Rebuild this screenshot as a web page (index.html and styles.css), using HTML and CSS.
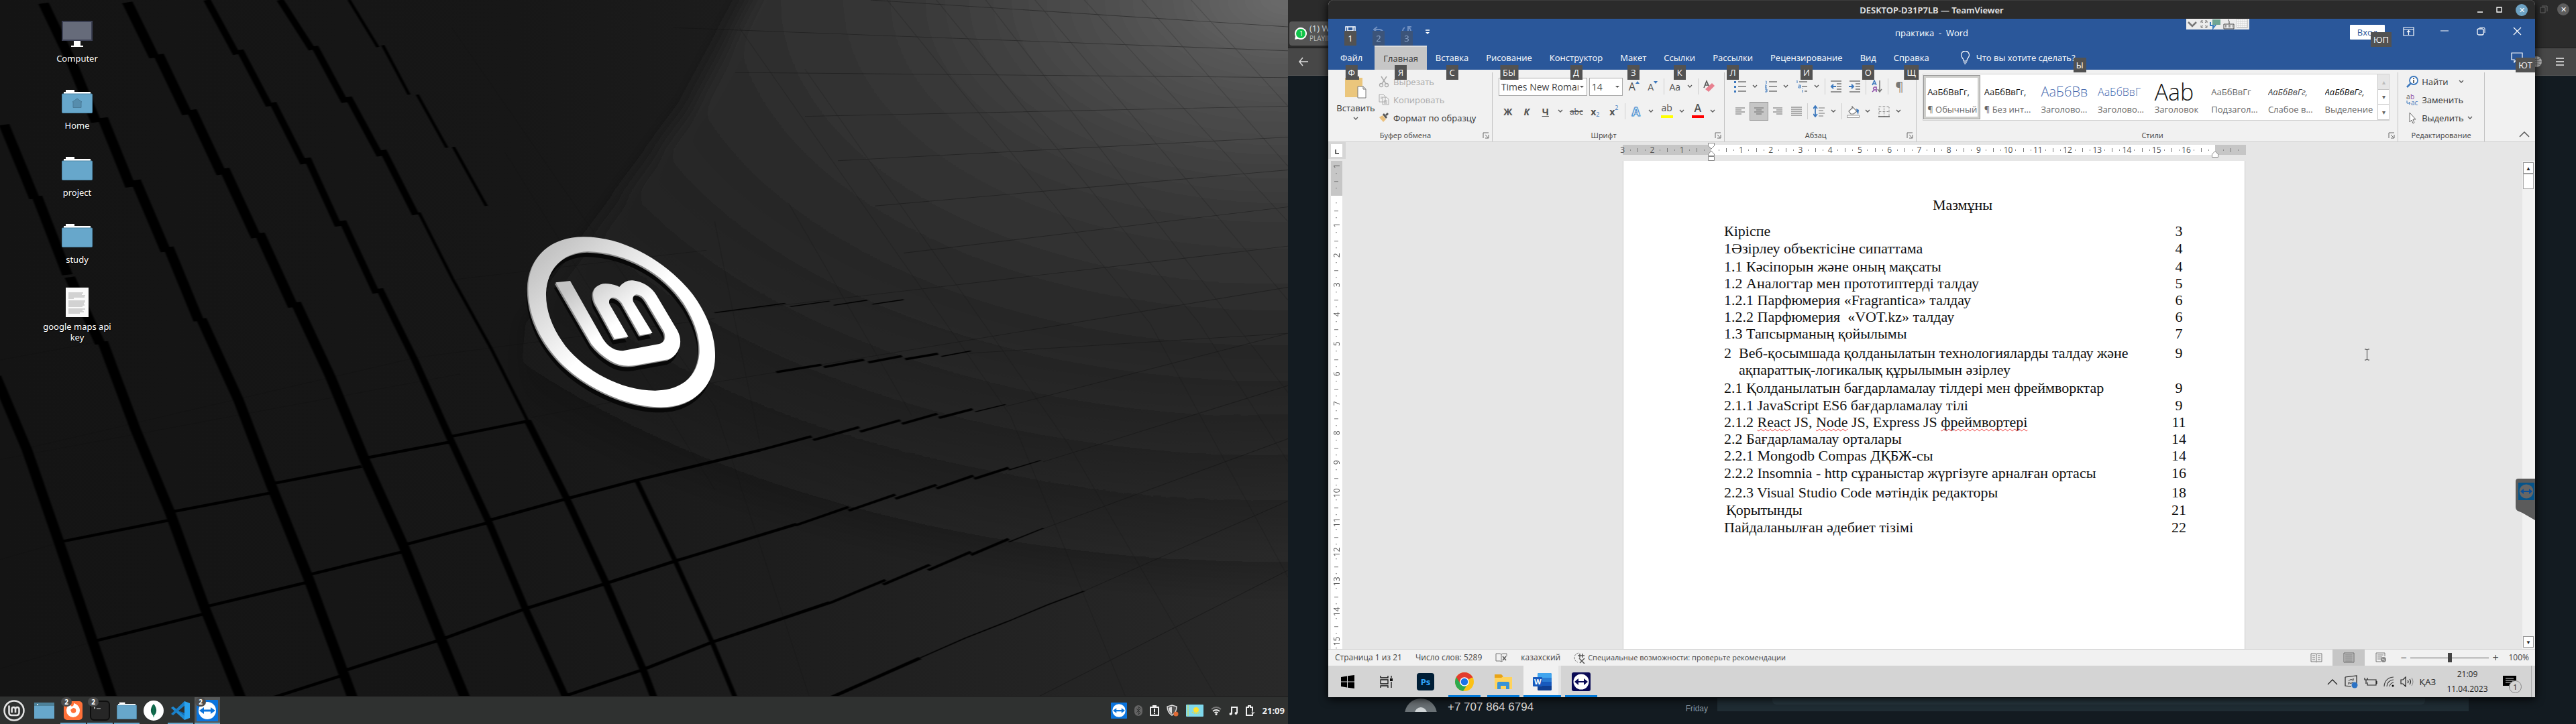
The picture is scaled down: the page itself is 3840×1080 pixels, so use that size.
FILE: index.html
```html
<!DOCTYPE html>
<html lang="ru">
<head>
<meta charset="utf-8">
<title>практика - Word</title>
<link rel="stylesheet" href="styles.css">
</head>
<body>
<svg class="defs" aria-hidden="true">
  <symbol id="chev" viewBox="0 0 8 6"><path d="M1 1l3 3 3-3" fill="none" stroke="#555" stroke-width="1.3"/></symbol>
  <symbol id="launch" viewBox="0 0 10 10"><path d="M1 9V1h8M4 4l4 4M9 4v5H4" fill="none" stroke="#666"/></symbol>
  <symbol id="folder" viewBox="0 0 46 36"><path d="M3 10V4h3V1h13v3h24v6z" fill="#fff"/><rect x=".5" y="7" width="45" height="28.500" rx="1" fill="#67a7cb" stroke="#4c87a8"/></symbol>
  <symbol id="tv" viewBox="0 0 32 32"><rect width="32" height="32" rx="1" fill="#0b74dc"/><circle cx="16" cy="16" r="13" fill="#fff"/><path d="M4 16l7-5v3.500h10V11l7 5-7 5v-3.500H11V21z" fill="#0b74dc"/></symbol>
  <symbol id="mint" viewBox="0 0 32 32"><circle cx="16" cy="16" r="14.500" fill="none" stroke="#e4e4e4" stroke-width="2.500"/><path d="M8.500 8.500V19q0 4 4 4h7q4 0 4-4v-5q0-3-2.700-3T18 14v5m0-5q0-3-2.700-3T12.600 14v5" fill="none" stroke="#e4e4e4" stroke-width="2.600"/></symbol>
</svg>
<div class="screens">
<section class="monitor linux">
  <svg class="wallpaper" viewBox="0 0 1920 1080" preserveAspectRatio="none" aria-hidden="true">
    <defs>
      <radialGradient id="glow" gradientUnits="userSpaceOnUse" cx="1568" cy="0" r="1300"><stop offset="0" stop-color="#6c6c6c"/><stop offset=".12" stop-color="#555"/><stop offset=".35" stop-color="#383838"/><stop offset=".6" stop-color="#272727"/><stop offset="1" stop-color="#1b1b1b" stop-opacity="0"/></radialGradient>
      <linearGradient id="base" x2="1"><stop offset="0" stop-color="#141414"/><stop offset=".4" stop-color="#171717"/><stop offset="1" stop-color="#292929"/></linearGradient>
      <linearGradient id="metal" x2="1" y2="1"><stop offset=".1" stop-color="#c4c4c4"/><stop offset=".5" stop-color="#fff"/></linearGradient>
      <filter id="soft" x="-20%" y="-20%" width="140%" height="140%"><feGaussianBlur stdDeviation="14"/></filter>
      <filter id="edge"><feGaussianBlur stdDeviation="1"/></filter>
    </defs>
    <rect width="1920" height="1080" fill="url(#base)"/>
    <g transform="scale(1.2245 .6888)">
      <path d="M930-60L845 220 730 490 640 700 620 1000 700 1600H1700V-60z" fill="url(#glow)" filter="url(#soft)"/>
      <g stroke="#111" stroke-width="1.300" fill="none" opacity=".45">
        <path d="M1060 0L1568 58M820 60L1568 110M895 157L1568 168M980 252L1568 230M1020 348L1568 297M1065 446L1568 368M1100 548L1568 448M870 678L1568 533M870 828L1568 622M1180 765L1568 722M1225 880L1568 722M1270 1000L1568 835M1270 1145L1568 950M1320 1280L1568 1085M1265 1508L1568 1235M555 605L860 542M505 775L870 690M30 972L505 775M0 995L560 810M0 1212L72 1175M0 1448L113 1390M120 740L0 780M645 905L870 828"/>
        <path d="M550 60L870 880 985 1508M615 330L870 1060M870 480L925 960M960 440L1110 900M1080 0L1400 700 1568 1250M1140 0L1460 700 1568 1000M1200 0L1568 850M1260 0L1568 650M1320 0L1568 480M1390 0L1568 360M1450 0L1568 230M980 150L1300 960 1480 1508M900 60L1230 900 1370 1508" opacity=".4"/>
      </g>
      <g stroke="#060606" stroke-width="13" fill="none" filter="url(#edge)">
        <path d="M-5 815L33 975 72 1175 113 1390 137 1515M5 270L42 430M45 425L82 595M85 600L122 745M125 740L165 930 207 1110 250 1320 294 1515M53 7L88 138 117 265M125 255L159 405M165 390L202 545M205 535L242 695M245 690L290 865 330 1050 375 1250 430 1515M155 5L188 125M193 118L228 248M233 238L270 378M273 365L312 515M316 505L357 665M360 655L402 815 445 1000 492 1185 537 1385 567 1515"/>
        <path d="M252 0L288 118M292 108L328 230M332 222L370 355M374 342L412 490M417 478L458 635M462 625L505 780 548 950 595 1130 640 1320 690 1515M341 0L380 108M383 100L420 222M424 210L463 338M466 325L506 465" stroke-width="9"/>
        <path d="M510 460L551 604 598 755 642 910M425 0L460 102M466 98L498 205M508 205L544 320M552 318L592 446" stroke-width="4"/>
        <path d="M642 910L690 1080 737 1260 783 1450 797 1515" stroke-width="9"/><path d="M775 1040L822 1215 868 1395 896 1515" stroke-width="6"/>
        <path d="M72 1174L205 1127M205 1110L328 1068M330 1048L440 1010M445 992L548 957M550 945L642 912M112 1390L247 1330M250 1314L372 1262M375 1245L490 1195M492 1180L592 1133M595 1127L690 1080 775 1040 925 975M330 1512L418 1462M420 1452L537 1385 640 1318 735 1265 822 1215 970 1135M680 1512L783 1450 868 1390 1010 1305M1010 1512L1120 1425" stroke-width="6"/>
        <path d="M945 806L1000 790M1003 795L1052 779M1057 785L1098 771M1102 778L1142 766M925 975L988 945M990 953L1046 925M1047 935L1096 910M1098 918L1141 896M1143 905L1184 886M968 1138L1033 1098M1033 1106L1090 1071M1090 1080L1140 1050M1140 1058L1185 1030M1186 1037L1228 1013M1010 1306L1078 1256M1075 1266L1132 1223M1130 1235L1182 1195M1182 1202L1228 1167" stroke-width="5"/>
        <path d="M1146 772L1182 760M1187 892L1224 876M1228 1018L1267 997M1228 1174L1270 1144M1120 1425L1175 1382 1228 1345 1275 1310 1320 1280M870 677L956 657M962 664L1010 652M1015 661L1056 650M1062 659L1100 649" stroke-width="2"/>
      </g>
    </g>
    <g transform="translate(760 330) scale(.3333)" fill-rule="evenodd">
      <g fill="#080808" transform="translate(-8 24)"><use href="#ring"/><use href="#lm"/></g>
      <g fill="#8c8c8c" transform="translate(-5 5)"><use href="#ring"/><use href="#lm"/></g>
      <g fill="url(#metal)">
        <path id="ring" d="M330 70C530 70 720 200 820 330 900 440 920 540 918 610 915 740 820 832 680 832 500 832 290 720 190 590 110 490 82 390 82 300 85 150 190 70 330 70zM350 135C240 138 168 210 162 320 160 400 190 480 250 560 340 670 490 755 650 758 760 758 840 700 848 590 850 540 840 470 785 380 700 240 530 140 350 135z"/>
        <path id="lm" d="M205 274L270 267 410 515Q445 580 505 580L665 550Q705 540 690 495L610 360Q590 327 565 328 545 335 552 360L638 500 582 511 500 365Q480 340 460 341 440 345 445 370L530 517 468 527 380 365Q362 320 385 295 410 275 440 280 470 283 490 294 515 262 550 265 620 275 655 330L750 490Q768 525 760 560 745 605 710 618L560 645Q500 655 450 625 400 595 365 550z"/>
      </g>
    </g>
  </svg>
  <nav class="shortcuts">
    <a href="#"><svg width="46" height="40" viewBox="0 0 46 40"><rect x="1" y="1" width="44" height="28" fill="#666b7a" stroke="#3b3f52" stroke-width="2"/><path d="M18 30h10v7h4v2H14v-2h4z" fill="#fff"/></svg><span>Computer</span></a>
    <a href="#"><svg width="46" height="36" viewBox="0 0 46 36"><use href="#folder"/><path d="M16 19l7-5 7 5h-1v8.500H17V19z" fill="#568dad" stroke="#4a7b98"/></svg><span>Home</span></a>
    <a href="#"><svg width="46" height="36"><use href="#folder"/></svg><span>project</span></a>
    <a href="#"><svg width="46" height="36"><use href="#folder"/></svg><span>study</span></a>
    <a href="#"><svg width="34" height="44" viewBox="0 0 34 44"><path d="M0 0h34v44H0z" fill="#fafafa"/><path d="M4 8h22M4 10h20M4 12h25M4 14h24M4 16h8M4 20h25M4 22h24M4 24h23M4 26h24M4 28h21M4 32h25M4 34h21M4 36h23M4 38h17" stroke="#aaa"/></svg><span>google maps api key</span></a>
  </nav>
  <footer class="panel">
    <button class="menu" aria-label="Menu"><svg width="32" height="32"><use href="#mint"/></svg></button>
    <button class="show" aria-label="Show desktop"><svg width="30" height="24" viewBox="0 0 30 24"><path d="M0 0h30v24H0z" fill="#67a7cb"/><path d="M0 0h30v5H0z" fill="#4d8199"/><circle cx="5" cy="3" r="1" fill="#fff"/></svg></button>
    <button class="app run" aria-label="Firefox"><svg width="30" height="30" viewBox="0 0 30 30"><rect x="1" y="1" width="28" height="28" rx="5" fill="#ff7139"/><path d="M10 6l3 3c3-1 3-3 3-5 6 2 9 6 9 11a10 10 0 0 1-20 0c0-4 2-5 2-8z" fill="#fff"/><path d="M11 14l4-3c4 0 5 3 4 6-2 3-7 2-7-1z" fill="#ff7139"/></svg><b class="count">2</b></button>
    <button class="app run" aria-label="Terminal"><svg width="30" height="30" viewBox="0 0 30 30"><rect x="1" y="1" width="28" height="28" rx="5" fill="#262626" stroke="#0f0f0f" stroke-width="2"/><path d="M6 10l2 1-2 1M10 12h6" stroke="#ddd" fill="none"/></svg><b class="count">2</b></button>
    <button class="app run" aria-label="Files"><svg width="30" height="26" viewBox="0 0 46 36" preserveAspectRatio="none"><use href="#folder"/></svg></button>
    <button class="app" aria-label="MongoDB"><svg width="30" height="30" viewBox="0 0 30 30"><circle cx="15" cy="15" r="15" fill="#fff"/><path d="M15 5c6 7 5 14 0 18-5-4-6-11 0-18z" fill="#116149"/><path d="M15 6v19" stroke="#0a8a55"/></svg></button>
    <button class="app run" aria-label="VS Code"><svg width="30" height="30" viewBox="0 0 30 30"><path d="M1 11l3-2 18 14v-4z" fill="#0a6fc2"/><path d="M1 11l3-2 19 15-2 5L1 11z" fill="#1f8ad2"/><path d="M1 20L21 1l2 5L4 22z" fill="#1a7fc8"/><path d="M21 1l8 3v22l-8 3z" fill="#2aa2ee"/></svg></button>
    <button class="app run active" aria-label="TeamViewer"><svg width="32" height="32"><use href="#tv"/></svg><b class="count">2</b></button>
    <div class="tray">
      <svg width="24" height="24"><use href="#tv"/></svg>
      <svg width="12" height="16" viewBox="0 0 12 16"><rect width="12" height="16" rx="6" fill="#646464"/><path d="M3 5l6 6-3 3V2l3 3-6 6" fill="none" stroke="#2f3130"/></svg>
      <svg width="14" height="16" viewBox="0 0 14 16"><path d="M1 3h12v12H1zM5 3V1h4v2M7 5v5M7 11v2" fill="none" stroke="#eee" stroke-width="2"/></svg>
      <svg width="18" height="18" viewBox="0 0 18 18"><path d="M8 1l7 2c0 6-2 10-7 13C3 13 1 9 1 3z" fill="#555" stroke="#ddd" stroke-width="1.500"/><path d="M8 3v11c-3-2-5-5-5-9z" fill="#ddd"/><circle cx="14" cy="14" r="3.500" fill="#e06a35"/></svg>
      <svg width="26" height="18" viewBox="0 0 26 18"><rect width="26" height="18" rx="1" fill="#7fd8ec"/><circle cx="15" cy="8" r="4" fill="#ffe02e"/><path d="M9 11q6 5 12 0M3 1v16" stroke="#d9d84d" stroke-width="1.500" fill="none" stroke-dasharray="2 1"/></svg>
      <svg width="16" height="14" viewBox="0 0 16 14"><path d="M1 5q7-6 14 0" stroke="#777" stroke-width="2" fill="none"/><path d="M3 8q5-4 10 0M5.500 10.500q2.500-2 5 0" stroke="#eee" stroke-width="2" fill="none"/><circle cx="8" cy="12.500" r="1.500" fill="#eee"/></svg>
      <svg width="14" height="14" viewBox="0 0 14 14"><path d="M4 12V2h8v9" fill="none" stroke="#eee" stroke-width="2"/><circle cx="2.500" cy="12" r="2" fill="#eee"/><circle cx="10.500" cy="11" r="2" fill="#eee"/></svg>
      <svg width="14" height="16" viewBox="0 0 14 16"><path d="M1 3h3V1h3v2h3v12H1z" fill="none" stroke="#eee" stroke-width="2"/><path d="M11 7l-3 4h3l-1 4 4-5h-3z" fill="#999"/></svg>
      <time>21:09</time>
    </div>
  </footer>
</section>

<section class="monitor remote">
  <div class="browser">
    <div class="browser-tabs">
      <div class="browser-tab"><svg width="18" height="18" viewBox="0 0 18 18"><path d="M0 18l1-5A9 9 0 1 1 5 17z" fill="#fff"/><circle cx="9" cy="9" r="7" fill="#10c34a"/><text x="7" y="13" font-size="10" fill="#fff">1</text></svg><div><span>(1) WhatsApp</span><small>PLAYING</small></div></div>
      <div class="browser-ctl"><svg width="12" height="12" viewBox="0 0 12 12"><path d="M1 3h7v8H1zM3 1h8v8" fill="none" stroke="#666"/></svg><button class="round grey" aria-label="Close">✕</button></div>
    </div>
    <div class="browser-bar"><svg width="14" height="14" viewBox="0 0 14 14"><path d="M14 7H1M6 1L1 7l5 6" fill="none" stroke="#ddd" stroke-width="1.500"/></svg><span class="fill"></span><svg width="18" height="18" viewBox="0 0 18 18"><circle cx="9" cy="9" r="8" fill="#bbb"/><path d="M9 1v16M1 9h16M3 4q6 4 12 0M3 14q6-4 12 0" stroke="#666" fill="none"/></svg><svg width="12" height="12" viewBox="0 0 12 12"><path d="M0 1h12M0 6h12M0 11h12" stroke="#eee" stroke-width="1.500"/></svg></div>
    <div class="chat">
      <svg width="48" height="20" viewBox="0 0 48 20"><circle cx="24" cy="24" r="24" fill="#6a7175"/><circle cx="24" cy="22" r="9" fill="#cfd4d6"/></svg>
      <span class="phone">+7 707 864 6794</span><span class="day">Friday</span><span class="compose"><i></i></span>
    </div>
  </div>

  <div class="window">
    <header class="frame"><h1>DESKTOP-D31P7LB — TeamViewer</h1>
      <div class="frame-ctl"><svg width="8" height="8" viewBox="0 0 8 8"><path d="M0 7h8" stroke="#fff" stroke-width="1.500"/></svg><svg width="9" height="9" viewBox="0 0 9 9"><path d="M1 1h7v7H1z" fill="none" stroke="#fff" stroke-width="1.300"/></svg><button class="round" aria-label="Закрыть сеанс">✕</button></div>
    </header>
    <div class="word-title">
      <div class="quick">
        <button aria-label="Сохранить"><svg width="16" height="16" viewBox="0 0 16 16"><path d="M1 1h14v14H1zM4 1v6h8V1" fill="none" stroke="#fff" stroke-width="1.500"/></svg><kbd>1</kbd></button>
        <button class="dim" aria-label="Отменить"><svg width="16" height="14" viewBox="0 0 16 14"><path d="M6 1L1 5l5 4M1 5h9q5 1 5 7" fill="none" stroke="#c6d4ee" stroke-width="2"/></svg><kbd>2</kbd></button>
        <button class="dim" aria-label="Повторить"><svg width="16" height="16" viewBox="0 0 16 16"><path d="M5 2a6 6 0 1 0 6 0M10 7V1h5" fill="none" stroke="#c6d4ee" stroke-width="2"/></svg><kbd>3</kbd></button>
        <button class="more" aria-label="Настройка панели"><svg width="8" height="8" viewBox="0 0 8 8"><path d="M1 1h6" stroke="#fff" stroke-width="1.500"/><path d="M1 4h6L4 7z" fill="#fff"/></svg></button>
      </div>
      <p class="doc-name">практика&nbsp; -&nbsp; Word</p>
      <div class="tv-bar"><svg width="92" height="16" viewBox="0 0 92 16"><path d="M3 5l6 6 6-6" stroke="#777" stroke-width="2.500" fill="none"/><path d="M22 6V3h3M28 3h3v3M31 10v3h-3M25 13h-3v-3M22 3l3 3M31 3l-3 3M22 13l3-3M31 13l-3-3" stroke="#777" fill="none"/><path d="M39 1h12v8h-6l-3 3V9h-3z" fill="#6fa593"/><path d="M36 5v5h4v4l4-5" fill="none" stroke="#3c7ebd" stroke-width="2"/><path d="M56 8h15v7H56zM64 8V4l-1-3" fill="none" stroke="#444"/><path d="M58 10h11M58 12h11" stroke="#444" stroke-dasharray="1 1"/><path d="M75 0h17v14H75z" fill="#ccc"/><path d="M76 2h15M76 5h15M76 8h15M76 11h15" stroke="#fff" stroke-width="2" stroke-dasharray="2 1"/></svg></div>
      <div class="word-ctl">
        <button class="login">Вход<kbd>ЮП</kbd></button>
        <button aria-label="Параметры ленты"><svg width="17" height="14" viewBox="0 0 17 14"><path d="M1 1h15v12H1zM1 4h15M8.500 12V6M6 8l2.500-2.500L11 8" fill="none" stroke="#fff" stroke-width="1.200"/></svg></button>
        <button aria-label="Свернуть"><svg width="12" height="12" viewBox="0 0 12 12"><path d="M0 6h12" stroke="#fff"/></svg></button>
        <button aria-label="Развернуть"><svg width="13" height="13" viewBox="0 0 13 13"><rect x="1" y="3" width="9" height="9" rx="2" fill="none" stroke="#fff" stroke-width="1.300"/><path d="M4 1h6q2 0 2 2v6" fill="none" stroke="#fff"/></svg></button>
        <button aria-label="Закрыть"><svg width="13" height="13" viewBox="0 0 13 13"><path d="M1 1l11 11M12 1L1 12" stroke="#fff" stroke-width="1.200"/></svg></button>
      </div>
    </div>
    <nav class="tabs">
      <button class="file">Файл<kbd>Ф</kbd></button><button class="on">Главная<kbd>Я</kbd></button><button>Вставка<kbd>С</kbd></button><button>Рисование<kbd>БЫ</kbd></button><button>Конструктор<kbd>Д</kbd></button><button>Макет<kbd>З</kbd></button><button>Ссылки<kbd>К</kbd></button><button>Рассылки<kbd>Л</kbd></button><button>Рецензирование<kbd>И</kbd></button><button>Вид<kbd>О</kbd></button><button>Справка<kbd>Щ</kbd></button>
      <button class="tell"><svg width="15" height="20" viewBox="0 0 15 20"><path d="M5 15q0-3-2-5a6 6 0 1 1 9 0q-2 2-2 5zM5 17h5M6 19h3" fill="none" stroke="#fff" stroke-width="1.200"/></svg>Что вы хотите сделать?<kbd>Ы</kbd></button>
      <button class="comments" aria-label="Комментарии"><svg width="18" height="16" viewBox="0 0 18 16"><path d="M1 1h16v10H8l-3 4v-4H1z" fill="none" stroke="#fff" stroke-width="1.200"/></svg><kbd>ЮТ</kbd></button>
    </nav>
    <div class="ribbon">
      <section class="group clip">
        <div class="body">
          <button class="paste"><svg width="32" height="34" viewBox="0 0 32 34"><path d="M0 2h26v29H0z" fill="#ebc67c"/><path d="M5 0h16v5H5z" fill="#555"/><path d="M19 15h8l4 4v13H19z" fill="#fff" stroke="#777"/><path d="M27 15v4h4" fill="none" stroke="#777"/></svg>Вставить<svg width="8" height="6"><use href="#chev"/></svg></button>
          <div class="stack">
            <button class="off"><svg width="16" height="18" viewBox="0 0 16 18"><path d="M4 1l7 11M12 1L5 12" stroke="#aaa" stroke-width="1.500"/><circle cx="4" cy="14" r="2.500" fill="none" stroke="#aaa" stroke-width="1.300"/><circle cx="12" cy="14" r="2.500" fill="none" stroke="#aaa" stroke-width="1.300"/></svg>Вырезать</button>
            <button class="off"><svg width="16" height="17" viewBox="0 0 16 17"><path d="M1 1h6l3 3v8H1zM6 5h6l3 3v8H6z" fill="#f1f1f1" stroke="#aaa"/><path d="M3 5h3M3 7h2M8 10h5M8 12h5M8 14h5" stroke="#aaa"/></svg>Копировать</button>
            <button><svg width="16" height="15" viewBox="0 0 16 15"><path d="M1 7l5-3 5 6-4 4z" fill="#ebc07c"/><path d="M6 3l2-2 5 6-2 2zM10 3l3-3 2 2-3 3z" fill="#555"/></svg>Формат по образцу</button>
          </div>
        </div>
        <div class="label"><span>Буфер обмена</span><svg width="10" height="10"><use href="#launch"/></svg></div>
      </section>
      <section class="group font">
        <div class="rows">
          <div class="row">
            <span class="combo face"><select aria-label="Шрифт"><option>Times New Roman</option></select></span>
            <span class="combo size"><select aria-label="Размер"><option>14</option></select></span>
            <button class="ic"><span class="grow">A</span><svg width="6" height="4" class="tri" viewBox="0 0 6 4"><path d="M0 4l3-4 3 4z" fill="#3c78bd"/></svg></button>
            <button class="ic"><span class="shrink">A</span><svg width="6" height="4" class="tri" viewBox="0 0 6 4"><path d="M0 0h6L3 4z" fill="#3c78bd"/></svg></button>
            <i class="sep"></i><button class="ic">Aa</button><svg class="dd" viewBox="0 0 8 6"><use href="#chev"/></svg>
            <i class="sep"></i><button class="ic" aria-label="Очистить"><svg width="18" height="20" viewBox="0 0 18 20"><path d="M1 12L5 2l4 9M2 8h5" fill="none" stroke="#555" stroke-width="1.500"/><path d="M3 14L13 5l4 4-9 9z" fill="#e8808f"/></svg></button>
          </div>
          <div class="row">
            <button class="ic"><b>Ж</b></button><button class="ic"><b><em>К</em></b></button><button class="ic"><b><u>Ч</u></b></button><svg class="dd"><use href="#chev"/></svg>
            <button class="ic"><s>abc</s></button><button class="ic"><b>x</b><sub>2</sub></button><button class="ic"><b>x</b><sup>2</sup></button>
            <i class="sep"></i><button class="ic glow">A</button><svg class="dd"><use href="#chev"/></svg>
            <button class="ic bar yellow">ab</button><svg class="dd"><use href="#chev"/></svg><button class="ic bar red">A</button><svg class="dd"><use href="#chev"/></svg>
          </div>
        </div>
        <div class="label"><span>Шрифт</span><svg width="10" height="10"><use href="#launch"/></svg></div>
      </section>
      <section class="group para">
        <div class="rows">
          <div class="row">
            <button class="ic" aria-label="Маркеры"><svg width="18" height="18" viewBox="0 0 18 18"><path d="M6 2h12M6 9h12M6 16h12" stroke="#777" stroke-width="1.300"/><path d="M0 1h3v3H0zM0 8h3v3H0zM0 15h3v3H0z" fill="#3c78bd"/></svg></button><svg class="dd"><use href="#chev"/></svg>
            <button class="ic" aria-label="Нумерация"><svg width="18" height="18" viewBox="0 0 18 18"><path d="M6 2h12M6 9h12M6 16h12" stroke="#777" stroke-width="1.300"/><path d="M1 1h1v4M0 7h2v2H0v2h3M0 13h3v4H0M1 15h2" fill="none" stroke="#3c78bd"/></svg></button><svg class="dd"><use href="#chev"/></svg>
            <button class="ic" aria-label="Многоуровневый список"><svg width="18" height="18" viewBox="0 0 18 18"><path d="M5 2h12M9 9h8M13 16h4" stroke="#777" stroke-width="1.300"/><path d="M1 0h1v4M4 7h3v4H4V9h3M10 12v1M10 14v4" fill="none" stroke="#3c78bd"/></svg></button><svg class="dd"><use href="#chev"/></svg>
            <i class="sep"></i><button class="ic" aria-label="Уменьшить отступ"><svg width="18" height="18" viewBox="0 0 18 18"><path d="M1 1h16M10 5h7M10 9h7M10 13h7M1 17h16" stroke="#777" stroke-width="1.300"/><path d="M9 9H2M5 6L2 9l3 3" fill="none" stroke="#3c78bd" stroke-width="2"/></svg></button>
            <button class="ic" aria-label="Увеличить отступ"><svg width="18" height="18" viewBox="0 0 18 18"><path d="M1 1h16M10 5h7M10 9h7M10 13h7M1 17h16" stroke="#777" stroke-width="1.300"/><path d="M0 9h7M4 6l3 3-3 3" fill="none" stroke="#3c78bd" stroke-width="2"/></svg></button>
            <i class="sep"></i><button class="ic" aria-label="Сортировка"><svg width="18" height="20" viewBox="0 0 18 20"><path d="M2 8l3-7 3 7M3 6h4" fill="none" stroke="#3c78bd" stroke-width="1.500"/><path d="M8 18v-7H5q-3 2 0 4h3M5 15l-3 3" fill="none" stroke="#8a4aa5" stroke-width="1.500"/><path d="M13 1v16M10 14l3 4 3-4" fill="none" stroke="#777" stroke-width="1.500"/></svg></button>
            <i class="sep"></i><button class="ic pil">¶</button>
          </div>
          <div class="row">
            <button class="ic" aria-label="По левому краю"><svg width="14" height="14" viewBox="0 0 14 14"><path d="M0 2h14M0 5h9M0 8h14M0 11h9" stroke="#666" stroke-width="1.200"/></svg></button>
            <button class="ic pressed" aria-label="По центру"><svg width="16" height="14" viewBox="0 0 16 14"><path d="M1 2h14M4 5h8M1 8h14M4 11h8" stroke="#666" stroke-width="1.200"/></svg></button>
            <button class="ic" aria-label="По правому краю"><svg width="14" height="14" viewBox="0 0 14 14"><path d="M0 2h14M5 5h9M0 8h14M5 11h9" stroke="#666" stroke-width="1.200"/></svg></button>
            <button class="ic" aria-label="По ширине"><svg width="16" height="14" viewBox="0 0 16 14"><path d="M0 1h16M0 4h16M0 7h16M0 10h16M0 13h16" stroke="#666" stroke-width="1.200"/></svg></button>
            <i class="sep"></i><button class="ic" aria-label="Интервал"><svg width="17" height="18" viewBox="0 0 17 18"><path d="M3 2v14M0 5l3-4 3 4M0 13l3 4 3-4" fill="none" stroke="#3c78bd" stroke-width="1.800"/><path d="M8 4h9M8 8h7M8 12h9M8 16h7" stroke="#777" stroke-width="1.200"/></svg></button><svg class="dd"><use href="#chev"/></svg>
            <i class="sep"></i><button class="ic" aria-label="Заливка"><svg width="19" height="19" viewBox="0 0 19 19"><path d="M3 9l6-6 6 6-5 4H6zM8 6V1" fill="#fff" stroke="#777" stroke-width="1.200"/><path d="M14 5l4 2-1 7-2-4z" fill="#3c78bd"/><path d="M.5 15h18v3.500H.5z" fill="#fff" stroke="#999"/></svg></button><svg class="dd"><use href="#chev"/></svg>
            <button class="ic" aria-label="Границы"><svg width="17" height="17" viewBox="0 0 17 17"><path d="M1 1h15v15M1 1v15M8.500 1v15M1 8.500h15" fill="none" stroke="#777" stroke-dasharray="1 1"/><path d="M0 16h17" stroke="#555" stroke-width="1.500"/></svg></button><svg class="dd"><use href="#chev"/></svg>
          </div>
        </div>
        <div class="label"><span>Абзац</span><svg width="10" height="10"><use href="#launch"/></svg></div>
      </section>
      <section class="group styles">
        <div class="gallery">
          <button class="style sel"><span>АаБбВвГг,</span><small>¶ Обычный</small></button>
          <button class="style"><span>АаБбВвГг,</span><small>¶ Без инт...</small></button>
          <button class="style h1"><span>АаБбВв</span><small>Заголово...</small></button>
          <button class="style h2"><span>АаБбВвГ</span><small>Заголово...</small></button>
          <button class="style ttl"><span>Ааb</span><small>Заголовок</small></button>
          <button class="style sub"><span>АаБбВвГг</span><small>Подзагол...</small></button>
          <button class="style weak"><span>АаБбВвГг,</span><small>Слабое в...</small></button>
          <button class="style em"><span>АаБбВвГг,</span><small>Выделение</small></button>
          <div class="spin"><button class="offb" aria-label="Вверх">▴</button><button aria-label="Вниз">▾</button><button aria-label="Все стили">▾</button></div>
        </div>
        <div class="label"><span>Стили</span><svg width="10" height="10"><use href="#launch"/></svg></div>
      </section>
      <section class="group edit">
        <div class="stack">
          <button><svg width="18" height="18" viewBox="0 0 18 18"><circle cx="11" cy="7" r="6" fill="#fff" stroke="#3c78bd" stroke-width="1.800"/><path d="M7 11l-6 6" stroke="#3c78bd" stroke-width="2.500"/><path d="M11 3v2M11 6v5" stroke="#333" stroke-width="1.500"/></svg>Найти<svg class="far" width="8" height="6"><use href="#chev"/></svg></button>
          <button><svg class="swap" width="18" height="22" viewBox="0 0 18 22"><text x="0" y="10" font-size="10" fill="#555">a</text><text x="6" y="10" font-size="10" fill="#8a4aa5">b</text><text x="7" y="19" font-size="10" fill="#3c78bd">ac</text><path d="M1 12v4h5M4 14l2 2-2 2" fill="none" stroke="#3c78bd"/></svg>Заменить</button>
          <button><svg width="18" height="18" viewBox="0 0 18 18"><path d="M5 1v14l3-3 2 5 2-1-2-5h4z" fill="#fff" stroke="#666"/></svg>Выделить<svg width="8" height="6"><use href="#chev"/></svg></button>
        </div>
        <div class="label solo"><span>Редактирование</span></div>
      </section>
      <button class="fold" aria-label="Свернуть ленту"><svg width="16" height="10" viewBox="0 0 16 10"><path d="M1 9l7-7 7 7" fill="none" stroke="#555" stroke-width="1.500"/></svg></button>
    </div>
    <div class="work">
      <div class="corner"><svg width="17" height="19" viewBox="0 0 17 19"><path d="M0 0h17v19H0z" fill="#fff"/><path d="M7 8v6h5" fill="none" stroke="#666" stroke-width="2"/></svg></div>
      <div class="ruler-line"><div class="ruler"><div class="cells">
        <span class="first">3</span><span>2</span><span>1</span><span></span><span>1</span><span>2</span><span>3</span><span>4</span><span>5</span><span>6</span><span>7</span><span>8</span><span>9</span><span>10</span><span>11</span><span>12</span><span>13</span><span>14</span><span>15</span><span>16</span><span></span><span class="last"></span>
      </div>
      <svg class="mark left" width="10" height="27" viewBox="0 0 10 27"><path d="M.5.500h9v4L5 9 .500 4.500zM5 12l4.500 5v2.500H.5V17zM.5 20.500h9v6h-9z" fill="#fff" stroke="#888"/></svg>
      <svg class="mark right" width="10" height="10" viewBox="0 0 10 10"><path d="M5 .500L9.500 5v4.500H.5V5z" fill="#fff" stroke="#888"/></svg>
      </div></div>
      <div class="vruler"><div class="vcells"><span class="first">1</span><span></span><span>1</span><span>2</span><span>3</span><span>4</span><span>5</span><span>6</span><span>7</span><span>8</span><span>9</span><span>10</span><span>11</span><span>12</span><span>13</span><span>14</span><span>15</span></div></div>
      <div class="canvas">
        <article class="page">
          <h2>Мазмұны</h2>
          <table>
            <tr class="g1"><td>Кіріспе</td><td>3</td></tr>
            <tr class="g2"><td>1Әзірлеу объектісіне сипаттама</td><td>4</td></tr>
            <tr><td>1.1 Кәсіпорын және оның мақсаты</td><td>4</td></tr>
            <tr><td>1.2 Аналогтар мен прототиптерді талдау</td><td>5</td></tr>
            <tr><td>1.2.1 Парфюмерия «Fragrantica» талдау</td><td>6</td></tr>
            <tr><td>1.2.2 Парфюмерия&nbsp; «VOT.kz» талдау</td><td>6</td></tr>
            <tr class="g4"><td>1.3 Тапсырманың қойылымы</td><td>7</td></tr>
            <tr class="g2 hang"><td>2&nbsp; Веб-қосымшада қолданылатын технологияларды талдау және ақпараттық-логикалық құрылымын әзірлеу</td><td>9</td></tr>
            <tr class="g1"><td>2.1 Қолданылатын бағдарламалау тілдері мен фреймворктар</td><td>9</td></tr>
            <tr><td>2.1.1 JavaScript ES6 бағдарламалау тілі</td><td>9</td></tr>
            <tr><td>2.1.2 <u>React</u> JS, <u>Node</u> JS, Express JS <u>фреймвортері</u></td><td>11</td></tr>
            <tr><td>2.2 Бағдарламалау орталары</td><td>14</td></tr>
            <tr class="g1"><td>2.2.1 Mongodb Compas ДҚБЖ-сы</td><td>14</td></tr>
            <tr class="g4"><td>2.2.2 Insomnia - http сұраныстар жүргізуге арналған ортасы</td><td>16</td></tr>
            <tr class="g1"><td>2.2.3 Visual Studio Code мәтіндік редакторы</td><td>18</td></tr>
            <tr class="g1 inset"><td>Қорытынды</td><td>21</td></tr>
            <tr><td>Пайдаланылған әдебиет тізімі</td><td>22</td></tr>
          </table>
        </article>
        <svg class="beam" width="9" height="18" viewBox="0 0 9 18"><path d="M1 1h2l1.500 1L6 1h2M4.500 2v14M1 17h2l1.500-1L6 17h2" fill="none" stroke="#333"/></svg>
      </div>
      <div class="scroll"><button aria-label="Прокрутить вверх">▲</button><i></i><button aria-label="Прокрутить вниз">▼</button></div>
      <svg class="tv-tab" width="29" height="62" viewBox="0 0 29 62"><path d="M29 0H4Q0 0 0 4v38q0 4 3 6l7 3 19 11z" fill="#5b5b5b"/><path d="M4 6h24v26H4z" fill="#06548a"/><circle cx="16" cy="19" r="10.500" fill="#666"/><path d="M7 19l5-4v3h8v-3l5 4-5 4v-3h-8v3z" fill="#0b4f9a"/></svg>
    </div>
    <footer class="status">
      <span>Страница 1 из 21</span><span>Число слов: 5289</span>
      <svg width="18" height="14" viewBox="0 0 18 14"><path d="M1 1h6l2 1 2-1h6v4M9 2v11L7 12H1V1M9 13l2-1" fill="none" stroke="#777"/><path d="M11 5l5 6M16 5l-5 6" stroke="#555" stroke-width="1.500"/></svg>
      <span>казахский</span>
      <span class="access"><svg width="18" height="17" viewBox="0 0 18 17"><path d="M7 1Q1 3 1 8t5 7" fill="none" stroke="#666" stroke-dasharray="3 1.500"/><path d="M6 5h10M9 2v6M13 2v6M8 9l8 8M16 9l-7 7" stroke="#555" stroke-width="1.500"/></svg>Специальные возможности: проверьте рекомендации</span>
      <div class="view">
        <button aria-label="Чтение"><svg width="18" height="15" viewBox="0 0 18 15"><path d="M1 1h7l1 1 1-1h7v12h-7l-1 1-1-1H1zM9 2v12M3 4h4M3 7h4M3 10h4M11 4h4M11 7h4M11 10h4" fill="none" stroke="#777"/></svg></button>
        <button class="pressed" aria-label="Разметка"><svg width="17" height="16" viewBox="0 0 17 16"><path d="M1 1h15v14H1zM3 4h11M3 7h11M3 10h11M3 13h11" fill="none" stroke="#666"/></svg></button>
        <button aria-label="Веб-документ"><svg width="17" height="16" viewBox="0 0 17 16"><path d="M14 6V1H1v13h7M3 4h9M3 7h7M3 10h5" fill="none" stroke="#777"/><circle cx="12" cy="11" r="4" fill="#888"/><path d="M10 10l4 2" stroke="#eee"/></svg></button>
        <b>−</b><input type="range" aria-label="Масштаб" min="0" max="100" value="50"><b>+</b><span>100%</span>
      </div>
    </footer>
    <footer class="taskbar">
      <button aria-label="Пуск"><svg width="20" height="20" viewBox="0 0 20 20"><path d="M0 3l9-1.500V9.500H0zM10 1.300L20 0v9.500H10zM0 10.500h9v8L0 17zM10 10.500h10V20l-10-1.300z" fill="#000"/></svg></button>
      <button aria-label="Представление задач"><svg width="20" height="20" viewBox="0 0 20 20"><path d="M1 1v3h11V1M1 19v-3h11v3M1 7h11v6H1zM17 1v3M17 10v9" fill="none" stroke="#111" stroke-width="1.300"/><path d="M15 5h4v4h-4z" fill="#111"/></svg></button>
      <button aria-label="Photoshop"><span class="ps">Ps</span></button>
      <button class="run" aria-label="Chrome"><svg width="28" height="28" viewBox="0 0 28 28"><circle cx="14" cy="14" r="14" fill="#fbc116"/><path d="M14 14L1.900 7A14 14 0 0 1 26.100 7z" fill="#e33b2e"/><path d="M14 14L1.900 7A14 14 0 0 0 12 27.900L19 17z" fill="#2da94f"/><path d="M14 8h12.500a14 14 0 0 0-24.600-1L8 17z" fill="#e33b2e"/><circle cx="14" cy="14" r="6.800" fill="#fff"/><circle cx="14" cy="14" r="5.300" fill="#1a73e8"/></svg></button>
      <button class="run" aria-label="Проводник"><svg width="26" height="22" viewBox="0 0 26 22"><path d="M0 1h10l2 3h14v18H0z" fill="#ffd35c"/><path d="M0 0h10l3 3-3 2H0z" fill="#e8a317"/><path d="M4 22v-9q0-2 2-2h14q2 0 2 2v9h-5v-5H9v5z" fill="#3793d8"/></svg></button>
      <button class="run cur" aria-label="Word"><svg width="28" height="26" viewBox="0 0 28 26"><rect x="7" width="21" height="26" rx="2" fill="#185abd"/><path d="M7 2q0-2 2-2h17q2 0 2 2v5H7z" fill="#41a5ee"/><path d="M7 7h21v6H7z" fill="#2b7cd3"/><path d="M7 19h21v5q0 2-2 2H9q-2 0-2-2z" fill="#103f91"/><rect y="6" width="14" height="14" rx="1" fill="#185abd"/><text x="2" y="17" font-size="11" font-weight="700" fill="#fff">W</text></svg></button>
      <button class="run" aria-label="TeamViewer"><svg width="28" height="28" viewBox="0 0 28 28"><rect width="28" height="28" rx="3" fill="#0a0a55"/><circle cx="14" cy="14" r="11.500" fill="#fff"/><path d="M4 14l6-5v4h8V9l6 5-6 5v-4h-8v4z" fill="#0a0a55"/></svg></button>
      <div class="wtray">
        <svg width="18" height="10" viewBox="0 0 18 10"><path d="M2 9l7-7 7 7" fill="none" stroke="#222" stroke-width="1.300"/></svg>
        <svg width="20" height="20" viewBox="0 0 20 20"><path d="M1 3l17-2v13M1 3v13l9 1" fill="none" stroke="#222" stroke-width="1.200"/><path d="M6 9q3-4 7-1V5M13 10q-3 4-7 1v3" fill="none" stroke="#222"/><circle cx="15" cy="15" r="4.500" fill="#2b72c4"/></svg>
        <svg width="20" height="14" viewBox="0 0 20 14"><path d="M5 4h13v8H5V8M19 6v4M1 1v3h4V1M3 4v6" fill="none" stroke="#222" stroke-width="1.200"/></svg>
        <svg width="16" height="16" viewBox="0 0 16 16"><path d="M1 15Q2 2 15 1M5 15q1-9 10-10M9 15q1-5 6-6" fill="none" stroke="#444" stroke-width="1.200"/><circle cx="14" cy="14" r="1.500"/></svg>
        <svg width="20" height="16" viewBox="0 0 20 16"><path d="M1 5h3l4-4v14l-4-4H1zM11 6q2 2 0 4M14 4q3 4 0 8" fill="none" stroke="#222" stroke-width="1.200"/><path d="M17 2q4 6 0 12" fill="none" stroke="#888"/></svg>
        <span class="lang">ҚАЗ</span>
        <div class="when"><time>21:09</time><time>11.04.2023</time></div>
        <span class="note"><svg width="20" height="18" viewBox="0 0 20 18"><path d="M0 0h20v15h-8l-3 3v-3H0z"/><path d="M4 4h12M4 7h12M4 10h8" stroke="#ddd"/></svg><b>1</b></span>
      </div>
    </footer>
  </div>
</section>
</div>
</body>
</html>
```
FILE: styles.css
```css
* { box-sizing: border-box; }
body { margin: 0; font-family: "Open Sans", "Noto Sans", sans-serif; font-size: 13px; color: #333; }
button { border: 0; padding: 0; background: none; font: inherit; color: inherit; }
a { color: inherit; text-decoration: none; }
.defs { display: none; }
svg { flex: none; display: block; }
.screens { display: grid; grid-template-columns: 1fr 1fr; min-height: 100vh; }
.monitor { position: relative; overflow: hidden; display: flex; flex-direction: column; }

/* Linux desktop */
.linux { font-family: "Noto Sans", sans-serif; background: #161616; }
.wallpaper { position: absolute; inset: 0; width: 100%; height: 100%; }
.shortcuts { position: relative; flex: 1; padding: 22px 59px; display: flex; flex-direction: column; }
.shortcuts a { width: 112px; height: 100px; display: grid; grid-template-rows: 57px auto; justify-items: center; align-items: center; align-content: start; text-align: center; color: #fff; line-height: 16px; text-shadow: 1px 1px 1px #000; }
.panel { position: relative; display: flex; align-items: stretch; height: 42px; background: #2f3130; border-top: 2px solid #222; gap: 2px; }
.panel button { position: relative; display: grid; place-items: center; }
.panel .menu { width: 42px; }
.panel .show { width: 44px; }
.panel .app { width: 38px; }
.panel .run { border-bottom: 2px solid #67a7cb; padding-top: 2px; }
.panel .active { background: #565858; }
.count { position: absolute; left: 1px; top: 0; width: 16px; height: 14px; border-radius: 7px; background: #4c4c4c; color: #fff; font-size: 10px; line-height: 14px; }
.tray { margin-left: auto; padding-right: 5px; display: flex; align-items: center; gap: 11px; color: #eee; font-weight: 700; }
.tray time { line-height: 20px; }

/* Browser behind the session window */
.remote { background: #131b21; }
.browser { flex: 1; display: flex; flex-direction: column; color: #ddd; }
.browser-tabs { height: 72px; background: #2b2b2b; border-bottom: 1px solid #1d1d1d; display: flex; justify-content: space-between; align-items: flex-start; }
.browser-tab { margin: 32px 0 0 2px; height: 36px; width: 200px; padding-left: 8px; border-radius: 4px; background: #555; display: flex; gap: 4px; align-items: center; line-height: 15px; }
.browser-tab small { display: block; font-size: 10px; color: #bbb; }
.browser-ctl { display: flex; gap: 14px; align-items: center; padding: 5px 10px; }
.round { width: 18px; height: 18px; border-radius: 50%; background: #6ea3c4; color: #fff; font-size: 11px; line-height: 18px; }
.round.grey { background: #5e5e5e; }
.browser-bar { height: 41px; background: #474747; border-bottom: 1px solid #555; padding: 0 18px 0 16px; display: flex; align-items: center; gap: 20px; }
.fill { flex: 1; }
.chat { margin-top: auto; height: 39px; padding-left: 174px; display: flex; align-items: flex-start; }
.chat svg { margin-top: 1px; }
.phone { flex: 0 0 160px; margin-left: 16px; font: 17px/28px "Liberation Sans", sans-serif; }
.day { margin-left: auto; padding-right: 14px; font: 12px/32px "Liberation Sans", sans-serif; color: #8696a0; }
.compose { flex: 0 0 1120px; margin-right: 160px; height: 20px; background: #1f2c33; }
.compose i { display: block; margin: 0 65px 0 82px; height: 10px; background: #26353d; border-radius: 0 0 6px 6px; }

/* Session window */
.window { position: absolute; inset: 0 61px 40px 60px; display: flex; flex-direction: column; border-radius: 8px 8px 0 0; overflow: hidden; background: #e6e6e6; box-shadow: 0 2px 14px #000; }
.frame { height: 28px; background: #2b2b2b; border-top: 1px solid #3c3c3c; display: grid; grid-template-columns: 100px 1fr 100px; align-items: center; color: #e6e6e6; }
.frame h1 { grid-column: 2; margin: 0; text-align: center; font: 600 13px/20px "Noto Sans", sans-serif; }
.frame-ctl { display: flex; justify-content: flex-end; align-items: center; gap: 20px; padding-right: 11px; }
kbd { position: absolute; z-index: 2; min-width: 18px; height: 22px; padding: 0 4px; background: #525252; color: #fff; font: 13px/22px "Open Sans", sans-serif; text-align: center; }
.word-title { height: 40px; background: #2a579a; color: #fff; display: grid; grid-template-columns: 1fr auto 1fr; position: relative; }
.quick { display: flex; padding-left: 10px; }
.quick button { position: relative; width: 42px; display: grid; justify-content: start; align-content: start; padding: 11px 0 0 15px; }
.quick .more { width: 24px; padding: 16px 0 0 8px; }
.quick kbd { left: 14px; top: 18px; }
.quick .dim { opacity: .45; }
.doc-name { margin: 0; line-height: 42px; font-size: 13px; }
.tv-bar { position: absolute; right: 426px; top: 0; height: 16px; width: 94px; background: #ececec; }
.word-ctl { display: flex; justify-content: flex-end; align-items: stretch; }
.word-ctl button { width: 54px; display: grid; place-items: center; align-content: start; padding-top: 12px; }
.word-ctl .login { position: relative; width: 52px; height: 22px; margin: 9px 8px 0 0; padding: 0; background: #fff; color: #2a579a; border-radius: 1px; line-height: 22px; }
.login kbd { left: 31px; top: 11px; }
.tabs { height: 36px; background: #2a579a; color: #fff; display: flex; padding-left: 5px; }
.tabs button { position: relative; padding: 0 13px; line-height: 36px; white-space: nowrap; }
.tabs .file { margin-right: 5px; }
.tabs kbd { top: 29px; left: 50%; translate: -50%; }
.tabs .on { background: #c6c6c6; color: #333; border-top: 2px solid #dcdcdc; line-height: 34px; }
.tabs .on kbd { top: 27px; }
.tabs .tell { margin-left: 20px; display: flex; align-items: center; gap: 9px; }
.tabs .tell kbd { top: 18px; left: auto; right: -3px; translate: none; }
.tabs .comments { margin-left: auto; padding: 0 18px; }
.tabs .comments kbd { top: 18px; left: auto; right: 0; translate: none; }

/* Ribbon */
.ribbon { height: 108px; background: #f1f1f1; border-bottom: 1px solid #cfcfcf; display: flex; }
.group { display: flex; flex-direction: column; margin: 4px 0 0; border-right: 1px solid #c2c2c2; }
.clip { width: 245px; } .font { width: 347px; } .para { width: 286px; }
.styles { flex: 1; min-width: 718px; } .edit { width: 129px; }
.label { margin-top: auto; height: 18px; display: grid; grid-template-columns: 1fr 14px; align-items: center; text-align: center; font-size: 11px; line-height: 18px; color: #444; }
.label.solo { grid-template-columns: 1fr; }
.clip .body { display: flex; }
.paste { width: 68px; margin-left: 7px; display: flex; flex-direction: column; align-items: center; gap: 4px; padding-top: 6px; line-height: 18px; }
.stack { display: flex; flex-direction: column; }
.stack button { height: 27px; display: flex; align-items: center; gap: 6px; white-space: nowrap; }
.off { color: #aaa; }
.stack .far { margin-left: 10px; }
.swap { overflow: visible; }
.edit .stack { padding-left: 12px; }
.edit .stack button { gap: 5px; }
.rows { padding: 7px 0 0 9px; display: flex; flex-direction: column; gap: 9px; }
.row { display: flex; height: 28px; align-items: center; }
.ic { position: relative; flex: 0 0 28px; height: 28px; display: flex; align-items: center; justify-content: center; color: #505050; font-size: 14px; }
.pressed { background: #c6c6c6; }
.ic.pressed { border: 1px solid #999; }
.dd { width: 18px; height: 6px; padding: 0 6px 0 4px; }
.sep { flex: 0 0 5px; height: 24px; background: linear-gradient(#cfcfcf, #cfcfcf) center / 1px 100% no-repeat; }
.combo { position: relative; height: 27px; }
.combo select { appearance: none; width: 100%; height: 100%; border: 1px solid #aaa; border-radius: 0; background: #fff; padding: 0 12px 0 3px; font: 14px "Open Sans", sans-serif; color: #444; }
.combo::after { content: ""; position: absolute; right: 5px; top: 12px; border: 3px solid transparent; border-top-color: #555; }
.face { width: 132px; margin-right: 3px; }
.size { width: 50px; margin-right: 3px; }
.grow { font-size: 16px; } .shrink { font-size: 14px; }
.tri { align-self: flex-start; margin-top: 6px; }
.ic s { font-size: 12px; } .ic sub, .ic sup { font-size: 9px; color: #3c78bd; line-height: 9px; }
.ic sub { align-self: flex-end; padding-bottom: 5px; } .ic sup { align-self: flex-start; padding-top: 4px; }
.glow { color: #f1f1f1; font-size: 18px; font-weight: 700; -webkit-text-stroke: 1px #3c88d0; text-shadow: 0 0 2px #5aa0e0; }
.bar { font-size: 14px; align-items: flex-start; line-height: 18px; }
.bar::after { content: ""; position: absolute; left: 5px; right: 5px; bottom: 4px; height: 4px; background: #ff0; }
.bar.red { font-size: 16px; font-weight: 600; } .bar.red::after { background: #f00; }
.pil { font-size: 19px; color: #777; }
.gallery { margin: 2px 12px 0 9px; height: 70px; border: 1px solid #d0d0d0; background: #fff; display: grid; grid-template-columns: repeat(8, minmax(0, 1fr)) 17px; }
.style { display: flex; flex-direction: column; overflow: hidden; text-align: left; margin: 1px 0; padding: 5px 0 0 2px; border: 4px solid transparent; color: #111; white-space: nowrap; }
.style span { overflow: hidden; height: 32px; line-height: 32px; width: 72px; font-size: 13px; }
.style small { font-size: 13px; line-height: 20px; color: #666; }
.style.sel { border-color: #cfcfcc; outline: 1px solid #999; outline-offset: -1px; }
.h1 span { font-size: 20px; color: #4a6db0; font-weight: 300; } .h2 span { font-size: 16px; color: #4a6db0; font-weight: 300; }
.ttl span { font-size: 34px; font-weight: 300; overflow: visible; } .sub span { color: #666; }
.weak span { font-style: italic; color: #444; } .em span { font-style: italic; }
.spin { display: grid; grid-template-rows: repeat(3, 1fr); border-left: 1px solid #c6c6c6; }
.spin button { font-size: 10px; line-height: 20px; color: #666; border-bottom: 1px solid #c6c6c6; }
.spin .offb { background: #e6e6e6; color: #bbb; }
.fold { width: 75px; display: grid; place-items: center; align-content: end; padding: 0 6px 6px 48px; }

/* Document area */
.work { position: relative; flex: 1; min-height: 0; display: grid; grid-template: 28px 1fr / 26px 1fr 19px; }
.corner { background: #d6d6d6; padding: 3px 5px 3px 4px; height: 25px; }
.ruler-line { display: flex; justify-content: center; padding-top: 4px; }
.ruler { position: relative; width: 929px; height: 15px; background: linear-gradient(to right, #c6c6c6 0 132px, #fff 132px 883px, #c6c6c6 883px); }
.cells { display: grid; grid-template-columns: repeat(22, 1fr); margin: 0 -22px; }
.cells span { height: 15px; text-align: center; font-size: 12px; line-height: 15px; color: #555; background: linear-gradient(#777, #777) left center / 1px 6px no-repeat, linear-gradient(#888, #888) 11px center / 1px 2px no-repeat, linear-gradient(#888, #888) 33px center / 1px 2px no-repeat; }
.cells .first { background: linear-gradient(#888, #888) 33px center / 1px 2px no-repeat; }
.cells .last { background: linear-gradient(#777, #777) left center / 1px 6px no-repeat, linear-gradient(#888, #888) 11px center / 1px 2px no-repeat; }
.mark { position: absolute; }
.mark.left { left: 127px; top: -3px; }
.mark.right { left: 878px; top: 9px; }
.vruler { grid-column: 1; margin-left: 4px; width: 17px; overflow: hidden; background: linear-gradient(#c6c6c6 0 52px, #fff 52px); }
.vcells { height: calc(100% + 24px); margin-top: -14px; display: grid; grid-template-rows: repeat(17, 1fr); }
.vcells span { writing-mode: vertical-rl; rotate: 180deg; text-align: center; font-size: 12px; line-height: 17px; color: #555; background: linear-gradient(#777, #777) center bottom / 6px 1px no-repeat, linear-gradient(#888, #888) center 11px / 2px 1px no-repeat, linear-gradient(#888, #888) center 33px / 2px 1px no-repeat; }
.canvas { position: relative; display: flex; justify-content: center; min-height: 0; overflow: hidden; }
.page { width: 928px; background: #fff; border: 1px solid #c9c9c9; border-width: 0 1px; padding: 53px 45px 0 130px; font: 22px/25px "Liberation Serif", serif; color: #111; }
.page h2 { margin: 0 0 14px; font: inherit; text-align: center; }
.page table { width: 100%; border-collapse: collapse; }
.page td { padding: 0 0 0 20px; vertical-align: top; }
.page td + td { width: 106px; padding: 0; text-align: center; }
.page .g1 td { padding-bottom: 1px; }
.page .g2 td { padding-bottom: 2px; }
.page .g4 td { padding-bottom: 4px; }
.page .hang td:first-child { padding-left: 42px; text-indent: -22px; }
.page .inset td:first-child { padding-left: 23px; }
.page u { text-decoration: underline wavy #e33 1px; text-underline-offset: 2px; text-decoration-skip-ink: none; }
.beam { position: absolute; right: 227px; top: 280px; }
.scroll { display: flex; flex-direction: column; background: #f1f1f1; padding: 2px 2px 2px 1px; }
.scroll button { height: 17px; border: 1px solid #999; background: #fff; font-size: 8px; line-height: 14px; color: #222; }
.scroll i { height: 23px; background: #fff; border: 1px solid #aaa; margin-bottom: auto; }
.tv-tab { position: absolute; right: 0; top: 502px; }

.status { height: 25px; background: #f1f1f1; border-top: 1px solid #d0d0d0; display: flex; align-items: center; gap: 20px; padding-left: 10px; font-size: 12px; line-height: 24px; color: #444; }
.access { display: flex; align-items: center; gap: 3px; font-size: 11px; }
.view { margin-left: auto; display: flex; align-items: center; height: 100%; padding-right: 9px; }
.view button { width: 48px; height: 100%; display: grid; place-items: center; }
.view b { width: 20px; text-align: center; font-weight: 400; font-size: 16px; }
.view span { margin-left: 6px; width: 34px; text-align: right; }
.view input { appearance: none; width: 117px; height: 14px; margin: 0; background: linear-gradient(#555, #555) center / 100% 1px no-repeat; }
.view input::-webkit-slider-thumb { appearance: none; width: 6px; height: 14px; background: #444; }

.taskbar { height: 47px; background: #d4d4d4; display: flex; }
.taskbar button { position: relative; flex: 0 0 58px; display: grid; place-items: center; }
.taskbar .run::after { content: ""; position: absolute; left: 5px; right: 5px; bottom: 0; height: 3px; background: #0078d7; }
.taskbar .cur { background: linear-gradient(to right, transparent 1px, #f1f1f1 1px 53px, #e4e4e4 53px 57px, transparent 57px); }
.taskbar .cur::after { left: 1px; right: 1px; }
.ps { width: 26px; height: 26px; border-radius: 4px; background: #001e36; color: #31a8ff; font-weight: 700; line-height: 26px; text-align: center; }
.wtray { margin-left: auto; display: flex; align-items: center; gap: 9px; padding-right: 28px; color: #222; position: relative; }
.when { display: grid; width: 76px; margin-right: 6px; text-align: center; line-height: 22px; font-size: 12px; }
.lang { font-size: 13px; }
.note { position: relative; }
.note b { position: absolute; left: 9px; top: 7px; width: 19px; height: 19px; border: 1px solid #888; border-radius: 50%; background: #d4d4d4; font-size: 11px; font-weight: 400; line-height: 17px; text-align: center; }
.wtray::after { content: ""; position: absolute; right: 5px; top: 0; bottom: 0; border-right: 1px solid #aaa; }
```
